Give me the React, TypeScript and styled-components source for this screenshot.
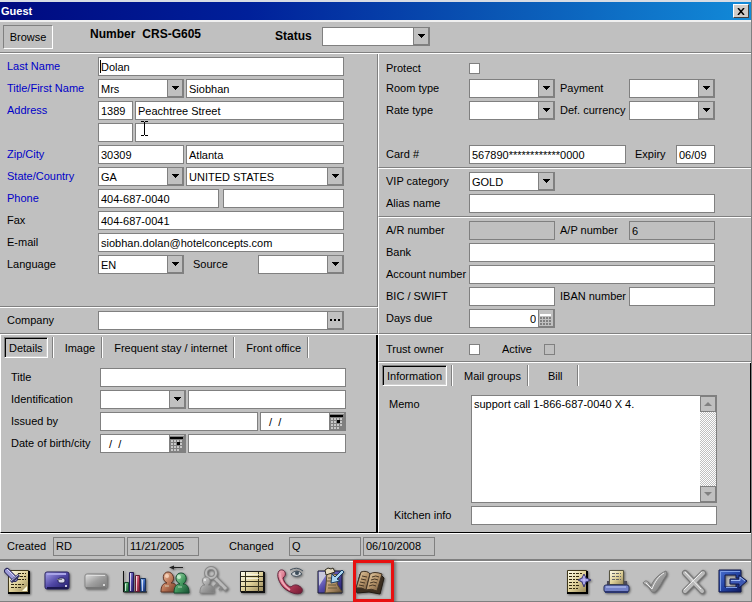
import React from "react";
import styled, { createGlobalStyle, css } from "styled-components";

const GRAY = "#808080";
const FACE = "#c0c0c0";

const GlobalStyle = createGlobalStyle`
  *, *::before, *::after { box-sizing: border-box; }
  body { margin: 0; background: ${FACE}; }
  body, button, input, select, textarea {
    font-family: "Liberation Sans", Arial, sans-serif;
    font-size: 11px;
    color: #000;
  }
`;

const Window = styled.main`
  display: flex;
  flex-direction: column;
  min-height: 100vh;
  background: ${FACE};
  border-right: 1px solid ${GRAY};
`;

const TitleBar = styled.header`
  display: flex;
  align-items: center;
  justify-content: space-between;
  height: 22px;
  padding: 0 2px 0 1px;
  border-top: 2px solid #d8dce4;
  border-bottom: 2px solid #f0f0f0;
  background: linear-gradient(90deg, #000a80 0%, #00209a 33%, #0a56b4 66%, #128ad8 100%);
`;

const WindowTitle = styled.h1`
  margin: 0;
  font-size: 11px;
  line-height: 18px;
  color: #fff;
`;

const CloseButton = styled.button`
  display: grid;
  place-items: center;
  width: 16px;
  height: 14px;
  padding: 0;
  background: #d0ccc8;
  border: 1px solid;
  border-color: #fff #404040 #404040 #fff;
`;

const HeaderBar = styled.div`
  display: flex;
  align-items: flex-start;
  height: 32px;
  padding: 3px 3px 0;
  border-bottom: 1px solid #fff;
  box-shadow: inset 0 -1px 0 ${GRAY};
`;

const BrowseButton = styled.button`
  width: 50px;
  height: 24px;
  padding: 0;
  background: ${FACE};
  border: 1px solid;
  border-color: ${GRAY} #fff #fff ${GRAY};
`;

const Strong = styled.span`
  font-size: 12px;
  font-weight: bold;
  line-height: 19px;
`;

const NumberGroup = styled.div`
  display: flex;
  gap: 7px;
  width: 185px;
  margin-left: 37px;
`;

const StatusGroup = styled.label`
  display: grid;
  grid-template-columns: 47px 108px;
  padding-top: 2px;
`;

const Columns = styled.div`
  display: grid;
  grid-template-columns: 378fr 373fr;
  flex: 1;
`;

const Column = styled.div`
  display: flex;
  flex-direction: column;
  min-width: 0;
`;

const Section = styled.section<{ $side: "left" | "right"; $bottom?: number }>`
  padding: 3px 0 ${(p) => p.$bottom ?? 0}px;
  padding-left: 7px;
  padding-right: ${(p) => (p.$side === "left" ? 33 : 36)}px;
  border-bottom: 1px solid ${GRAY};
  box-shadow: 0 1px 0 #fff;
  margin-bottom: 1px;
  ${(p) =>
    p.$side === "left"
      ? css`border-right: 1px solid ${GRAY};`
      : css`border-left: 1px solid #fff;`}
`;

const TabPanel = styled.section<{ $side: "left" | "right" }>`
  flex: 1;
  padding: 2px ${(p) => (p.$side === "left" ? 30 : 33)}px 3px 3px;
  border-left: 1px solid #fff;
  border-right: ${(p) => (p.$side === "left" ? 2 : 1)}px solid #000;
  border-bottom: 1px solid #000;
`;

const TabList = styled.div`
  display: flex;
  height: 21px;
  gap: 4px;
`;

const TabItem = styled.button<{ $selected?: boolean; $wide?: boolean }>`
  flex: none;
  height: 21px;
  padding: 0 ${(p) => (p.$wide ? 15 : 7)}px;
  background: ${FACE};
  border: 0;
  white-space: nowrap;
  border-right: 1px solid #fff;
  box-shadow: inset -1px 0 0 ${GRAY};
  ${(p) =>
    p.$selected &&
    css`
      padding: 0 4px;
      border: 1px solid;
      border-color: ${GRAY} #fff #fff ${GRAY};
      box-shadow: inset 1px 1px 0 #000, inset -1px -1px 0 #d0d0d0;
    `}
`;

const TabDivider = styled.span`
  width: 2px;
  height: 21px;
  background: linear-gradient(90deg, ${GRAY} 50%, #fff 50%);
`;

const PanelRows = styled.div<{ $top: number }>`
  padding: ${(p) => p.$top}px 0 0 7px;
`;

const Row = styled.div<{ $label?: number; $center?: boolean }>`
  display: grid;
  grid-template-columns: ${(p) => p.$label ?? 91}px minmax(0, 1fr);
  align-items: ${(p) => (p.$center ? "center" : "start")};
  min-height: 22px;
`;

const Caption = styled.label<{ $blue?: boolean; $indent?: number }>`
  padding-left: ${(p) => p.$indent ?? 0}px;
  line-height: 19px;
  white-space: nowrap;
  color: ${(p) => (p.$blue ? "#0000c8" : "#000")};
`;

const Fields = styled.div<{ $cols?: string; $gap?: number }>`
  position: relative;
  display: grid;
  grid-template-columns: ${(p) => p.$cols ?? "minmax(0, 1fr)"};
  column-gap: ${(p) => p.$gap ?? 2}px;
  align-items: center;
`;

const TextInput = styled.input`
  width: 100%;
  min-width: 0;
  height: 19px;
  padding: 0 2px;
  background: #fff;
  border: 1px solid ${GRAY};
  border-radius: 0;
  outline: 0;
  &:read-only { background: ${FACE}; }
`;

const ComboFrame = styled.span`
  display: grid;
  grid-template-columns: minmax(0, 1fr) 17px;
  height: 19px;
  min-width: 0;
  background: #fff;
  border: 1px solid ${GRAY};
  border-right: 0;
`;

const ComboSelect = styled.select`
  grid-area: 1 / 1 / 2 / 3;
  width: 100%;
  height: 17px;
  padding: 0 18px 0 2px;
  appearance: none;
  background: transparent;
  border: 0;
  border-radius: 0;
  outline: 0;
`;

const ComboInput = styled.input<{ $right?: boolean }>`
  width: 100%;
  min-width: 0;
  height: 17px;
  padding: 0 2px;
  background: #fff;
  border: 0;
  outline: 0;
  text-align: ${(p) => (p.$right ? "right" : "left")};
`;

const endCap = css`
  display: grid;
  place-items: center;
  width: 17px;
  height: 17px;
  padding: 0;
  background: ${FACE};
  border: 1px solid ${GRAY};
  border-top: 0;
  border-right-width: 2px;
`;

const ComboArrow = styled.span`
  ${endCap}
  grid-area: 1 / 2;
  pointer-events: none;
`;

const EndButton = styled.button`
  ${endCap}
`;

const Check = styled.input`
  appearance: none;
  width: 11px;
  height: 11px;
  margin: 0;
  background: #fff;
  border: 1px solid ${GRAY};
  &:disabled { background: ${FACE}; }
`;

const Caret = styled.span`
  position: absolute;
  left: 2px;
  top: 3px;
  width: 1px;
  height: 13px;
  background: #000;
`;

const Pointer = styled.svg`
  position: absolute;
  left: 43px;
  top: -3px;
`;

const MemoFrame = styled.div`
  display: grid;
  grid-template-columns: minmax(0, 1fr) 17px;
  height: 108px;
  margin-bottom: 3px;
  background: #fff;
  border: 1px solid ${GRAY};
  border-right: 0;
`;

const MemoText = styled.textarea`
  height: 106px;
  padding: 2px;
  line-height: 13px;
  background: #fff;
  border: 0;
  outline: 0;
  resize: none;
  overflow: hidden;
`;

const ScrollTrack = styled.div`
  display: flex;
  flex-direction: column;
  justify-content: space-between;
  border-right: 1px solid ${GRAY};
  background: repeating-conic-gradient(#c0c0c0 0 25%, #fff 0 50%) 0 0 / 2px 2px;
`;

const ScrollButton = styled.button`
  display: grid;
  place-items: center;
  width: 16px;
  height: 16px;
  padding: 0;
  background: ${FACE};
  border: 1px solid ${GRAY};
`;

const AuditBar = styled.div`
  display: flex;
  align-items: center;
  height: 28px;
  padding: 0 7px 1px;
  border-top: 1px solid #fff;
  border-bottom: 2px solid ${GRAY};
`;

const AuditGroup = styled.div<{ $label: number }>`
  display: grid;
  grid-template-columns: ${(p) => p.$label}px 72px 72px;
  column-gap: 2px;
  margin-right: 30px;
`;

const ToolBar = styled.footer`
  display: flex;
  justify-content: space-between;
  height: 41px;
  border-top: 1px solid #fff;
  border-bottom: 1px solid ${GRAY};
`;

const ToolGroup = styled.div`
  display: flex;
  gap: 3px;
`;

const ToolButton = styled.button`
  position: relative;
  display: grid;
  place-items: center;
  width: 36px;
  height: 38px;
  padding: 0;
  background: transparent;
  border: 0;
  svg { filter: drop-shadow(1px 1px 1px rgba(60, 60, 60, 0.7)); }
`;

const Highlight = styled.span`
  position: absolute;
  left: 2px;
  top: -2px;
  width: 41px;
  height: 42px;
  border: 3px solid #e81010;
  box-shadow: 2px 1px 3px rgba(60, 60, 60, 0.6), inset 1px 1px 3px rgba(60, 60, 60, 0.5);
`;

function DownArrow() {
  return (
    <svg width="7" height="4" viewBox="0 0 7 4" shapeRendering="crispEdges" aria-hidden="true">
      <path d="M0 0h7v1H6v1H5v1H4v1H3V3H2V2H1V1H0z" />
    </svg>
  );
}

function Combo({ id, value = "", label }: { id: string; value?: string; label?: string }) {
  return (
    <ComboFrame>
      <ComboSelect id={id} aria-label={label} defaultValue={value}>
        <option>{value}</option>
      </ComboSelect>
      <ComboArrow><DownArrow /></ComboArrow>
    </ComboFrame>
  );
}

function CalendarIcon() {
  return (
    <svg width="14" height="15" viewBox="0 0 14 15" shapeRendering="crispEdges" aria-hidden="true">
      <path fill="#808080" d="M0 0h14v15H0z" />
      <path fill="#000" d="M0 1h13v2H0z" />
      <path
        stroke="#c8c8c8" strokeWidth="2" strokeDasharray="2 1"
        d="M1 5h11M1 8h11M1 11h11M1 14h8"
      />
      <path fill="#000" d="M7 6h3v3H7z" />
    </svg>
  );
}

function CalculatorIcon() {
  return (
    <svg width="14" height="15" viewBox="0 0 14 15" shapeRendering="crispEdges" aria-hidden="true">
      <path fill="#fff" d="M1 3h11v2H1z" />
      <path stroke="#808080" strokeWidth="2" strokeDasharray="2 1" d="M1 7h11M1 10h11M1 13h11" />
    </svg>
  );
}

function DateField({ id, label }: { id: string; label?: string }) {
  return (
    <ComboFrame>
      <ComboInput id={id} aria-label={label} defaultValue="  /  /" />
      <EndButton type="button" aria-label="Open calendar"><CalendarIcon /></EndButton>
    </ComboFrame>
  );
}

const Icon = ({ children }: { children: React.ReactNode }) => (
  <svg width="32" height="32" viewBox="0 0 32 32" aria-hidden="true">{children}</svg>
);

function IconGradients() {
  const defs: [string, string, string, string][] = [
    ["paper", "#fffff0", "#e0d29a", "#948456"],
    ["violet", "#aaa6ec", "#5148a6", "#211c68"],
    ["silver", "#e4e4e4", "#a0a0a0", "#777777"],
    ["orange", "#f4c8ac", "#bd7858", "#6b3826"],
    ["tan", "#e8d4b0", "#b8966c", "#6b5238"],
    ["green", "#b0e4b8", "#449a60", "#164e32"],
    ["red", "#f4b0bc", "#c04460", "#701830"],
    ["blue", "#b4d4f8", "#3e6ac0", "#142460"],
    ["navy", "#4a70d0", "#2444a4", "#101c60"],
  ];
  return (
    <svg width="0" height="0" display="block" aria-hidden="true">
      <defs>
        {defs.map(([id, a, b, c]) => (
          <linearGradient key={id} id={id} x1="0" y1="0" x2="1" y2="1">
            <stop offset="0" stopColor={a} />
            <stop offset="0.5" stopColor={b} />
            <stop offset="1" stopColor={c} />
          </linearGradient>
        ))}
      </defs>
    </svg>
  );
}

const NoteIcon = () => (
  <Icon>
    <path fill="url(#paper)" stroke="#40381c" d="M6.500 5.500h20v22h-20z" />
    <path fill="none" stroke="#000" strokeWidth="2" d="M6 28h21V6" />
    <path stroke="#302810" strokeDasharray="3 1 2 1" d="M16 8.500h8M18 11.500h6M9 16.500h4M16 14.500h8M9 19.500h13M9 22.500h11" />
    <path fill="#fffde0" d="m20 26 5-5v5z" />
    <path stroke="#29285c" strokeWidth="6" strokeLinecap="round" d="m5 6 8 8" />
    <path stroke="#9d9bd8" strokeWidth="4" strokeLinecap="round" d="m5 6 8 8" />
    <path stroke="#d8d8ff" d="m5 4 8 8" />
    <path stroke="#393866" strokeWidth="3" d="m9 17 8-7" />
    <path stroke="#bdbde8" d="m9 16 7-6" />
  </Icon>
);

const CardIcon = () => (
  <Icon>
    <rect x="4" y="7" width="24" height="17" rx="2" fill="url(#violet)" stroke="#282260" />
    <path stroke="#a9a5e8" strokeWidth="2" d="M6 9h19" />
    <path stroke="#1c1850" strokeWidth="2" d="M6 23h21" />
    <rect x="17" y="13" width="7" height="5" rx="2" fill="#d8d8e8" stroke="#28245c" />
    <path stroke="#777" d="M16 14.500h5" />
    <circle cx="25" cy="21" r="1" fill="#fff" />
  </Icon>
);

const GrayCardIcon = () => (
  <Icon>
    <rect x="5" y="9" width="22" height="14" rx="2" fill="url(#silver)" stroke="#888" />
    <path stroke="#ddd" d="M7 10.500h18" />
    <path stroke="#777" strokeWidth="2" d="M6 23h20" />
    <circle cx="24" cy="20" r="1" fill="#f4f4f4" />
  </Icon>
);

const ChartIcon = () => (
  <Icon>
    <path fill="none" stroke="#111" d="M4.500 6v21H28" />
    <path fill="url(#green)" stroke="#134b2c" d="M5.500 17.500h4v9h-4z" />
    <path fill="url(#violet)" stroke="#211a55" d="M10.500 7.500h4v19h-4z" />
    <path fill="url(#red)" stroke="#621a30" d="M16.500 10.500h4v16h-4z" />
    <path fill="url(#blue)" stroke="#183158" d="M21.500 13.500h5v13h-5z" />
    <path stroke="#fff" opacity=".7" d="M6.500 19v7M11.500 8v18M17.500 11v15M23.500 15v11" />
  </Icon>
);

const PeopleIcon = () => (
  <Icon>
    <path fill="none" stroke="#222" d="M12 2.500h13" />
    <path fill="#222" d="m11 2.500 5-2v4z" />
    <path fill="url(#orange)" stroke="#603424" d="M3 27c0-6 2-9 6-9C3 15 5 7 10 7s8 8 3 11c5 0 6 3 6 9z" />
    <path fill="url(#green)" stroke="#174d31" d="M16 28c0-6 2-9 6-9-6-3-5-11 1-11s7 8 2 11c4 0 6 3 6 9z" />
    <circle cx="9" cy="11" r="2" fill="#ffe4d0" opacity=".7" />
    <circle cx="21" cy="12" r="2" fill="#e0ffe4" opacity=".7" />
    <path stroke="#e2f3df" opacity=".7" d="M20 22h4M7 21h4" />
  </Icon>
);

const KeyIcon = () => (
  <Icon>
    <path fill="none" stroke="#888" strokeWidth="5" d="m18 13 12 12" />
    <path fill="none" stroke="#bbb" strokeWidth="3" d="m17 12 12 12" />
    <path fill="none" stroke="#888" strokeWidth="2" d="m21 18-4 4M25 22l-3 3" />
    <circle cx="14" cy="8" r="5" fill="none" stroke="#888" strokeWidth="4" />
    <circle cx="14" cy="8" r="5" fill="none" stroke="#bbb" strokeWidth="2" />
    <path fill="url(#silver)" stroke="#888" d="M3 28c0-6 2-8 5-8-4-3-3-8 1-8s6 5 2 8c5 0 6 3 6 8z" />
    <circle cx="8" cy="15" r="1" fill="#eee" />
  </Icon>
);

const TableIcon = () => (
  <Icon>
    <path fill="url(#paper)" stroke="#222" d="M4.500 6.500h23v20h-23z" />
    <path fill="none" stroke="#111" strokeWidth="2" d="M5 27h23V7" />
    <path stroke="#33301c" d="M5 11.500h22M5 16.500h22M5 21.500h22M9.500 7v20M22.500 7v20" />
    <path stroke="#fff" opacity=".6" d="M10 9.500h13M10 13.500h13" />
  </Icon>
);

const PhoneIcon = () => (
  <Icon>
    <path
      fill="url(#red)" stroke="#642039"
      d="M4 6c2-2 5-1 6 1 1 3 0 4-2 6 1 4 4 8 8 9 2-2 5-3 8-1 4 2 4 5 2 7-4 2-11 0-17-5C4 18 1 10 4 6z"
    />
    <path fill="none" stroke="#f0a8b6" strokeWidth="2" d="M5 8c0 7 4 13 10 17" />
    <path fill="#d0d4d8" stroke="#45525e" d="M16 9q6-6 11 0-6 5-11 0z" />
    <path fill="none" stroke="#45525e" d="M15 5q7-4 13 1" />
    <circle cx="22" cy="8" r="2" fill="#3c4c5a" />
  </Icon>
);

const ClipboardIcon = () => (
  <Icon>
    <path fill="url(#violet)" stroke="#191b35" d="M4 6h24v22H4z" />
    <path fill="#c8c8dc" d="M5 7h9L5 21z" />
    <path fill="url(#tan)" stroke="#554a2e" d="m13 8 12 2-2 9 5 8-17 1 1-8z" />
    <path fill="#e6dcc0" stroke="#302c20" d="m11 5 3-2 3 1 2-1 2 4-9 3z" />
    <path stroke="#655939" d="M14 13h5M13 16h7M14 20h8M14 23h9" />
    <path fill="#a9d4f0" stroke="#1b3d63" d="m28 5-7 7-3-3-1 9 9-2-3-2 7-7z" />
  </Icon>
);

const BookIcon = () => (
  <Icon>
    <path fill="#3c2e20" stroke="#211a12" d="m3 25 4-16 9 2 12-1 3 3-4 16-11-2-12 1z" />
    <path fill="url(#tan)" stroke="#403224" d="M3 23 8 7q6-2 9 2l-4 16q-4-3-10-2z" />
    <path fill="url(#tan)" stroke="#403224" d="m13 25 4-16q4-3 12 0l-5 17q-6-3-11-1z" />
    <path stroke="#483826" fill="none" d="m9 11 5 1M8 14l5 1M7 17l5 1M6 20l5 1M19 12q4-2 7 0M18 15q4-2 7 0M17 18q4-2 7 0M16 21q4-2 7 0" />
  </Icon>
);

const AddNoteIcon = () => (
  <Icon>
    <path fill="url(#paper)" stroke="#40381c" d="M6.500 5.500h19v22h-19z" />
    <path fill="none" stroke="#000" strokeWidth="2" d="M6 28h20V6" />
    <path stroke="#302810" strokeDasharray="3 1 2 1" d="M8 8.500h13M8 11.500h10M8 14.500h10M8 17.500h9M8 20.500h10M8 23.500h9" />
    <path fill="#8582ce" stroke="#393873" d="m23 9 2 4 5 2-5 2-2 5-2-5-4-2 4-2z" />
    <path stroke="#ccc9ff" d="M23 11v8M20 15h7" />
  </Icon>
);

const PrinterIcon = () => (
  <Icon>
    <path fill="#4c4a58" d="M7 16h3v4h14v-4h3v6H7z" />
    <path fill="url(#paper)" stroke="#575440" d="M9.500 5.500h14v14h-14z" />
    <path stroke="#666" strokeDasharray="3 1" d="M12 8.500h9M12 11.500h9M12 14.500h9" />
    <rect x="4" y="20" width="25" height="7" rx="2" fill="#7482c8" stroke="#26305c" />
    <path stroke="#c0ccf4" d="M6 22h20" />
    <path stroke="#2c3670" strokeWidth="2" d="M5 27h23" />
  </Icon>
);

const CheckIcon = () => (
  <Icon>
    <path fill="url(#silver)" stroke="#777" d="M4 18c2-3 4-2 5-1l3 4C15 14 20 9 27 6c1 2 1 3 0 5-4 5-6 12-11 16-3 1-4-1-5-3-2-3-4-4-7-6z" />
    <path fill="none" stroke="#eee" d="m7 18 6 6c3-8 7-13 12-16" />
  </Icon>
);

const CrossIcon = () => (
  <Icon>
    <path fill="none" stroke="#777" strokeWidth="6" strokeLinecap="round" d="m7 8 17 18M25 8 7 26" />
    <path fill="none" stroke="#bbb" strokeWidth="4" strokeLinecap="round" d="m7 8 17 18M25 8 7 26" />
    <path fill="none" stroke="#eee" d="m7 7 16 17M24 7 6 25" />
  </Icon>
);

const ExitIcon = () => (
  <Icon>
    <path fill="url(#navy)" stroke="#10184c" d="M2 5h22v8h-5v-3H8v12h11v-3h5v8H2z" />
    <path fill="none" stroke="#7c9ce4" d="M3.500 26V6.500H23M9 22.500h11" />
    <path fill="#3c58b4" stroke="#10184c" d="M13 14h9v-4l8 6-8 7v-4h-9z" />
    <path fill="none" stroke="#9fb8f0" d="M14 15.500h9V12l5 4" />
  </Icon>
);

const leftTools: [string, () => React.ReactElement][] = [
  ["Notes", NoteIcon], ["Guest card", CardIcon], ["Card", GrayCardIcon], ["Statistics", ChartIcon],
  ["Merge guests", PeopleIcon], ["Guest access", KeyIcon], ["Table", TableIcon],
  ["Call log", PhoneIcon], ["Tasks", ClipboardIcon], ["Guest book", BookIcon],
];

const rightTools: [string, () => React.ReactElement][] = [
  ["Add note", AddNoteIcon], ["Print", PrinterIcon], ["Confirm", CheckIcon],
  ["Cancel", CrossIcon], ["Exit", ExitIcon],
];

const pair = "minmax(0, 86fr) minmax(0, 158fr)";
const pairWithLabel = "minmax(0, 1fr) 70px minmax(0, 1fr)";

export default function App() {
  return (
    <Window>
      <GlobalStyle />
      <IconGradients />
      <TitleBar>
        <WindowTitle>Guest</WindowTitle>
        <CloseButton type="button" aria-label="Close">
          <svg width="8" height="7" viewBox="0 0 8 7" aria-hidden="true">
            <path stroke="#000" strokeWidth="1.500" d="m1 0 6 7M7 0 1 7" />
          </svg>
        </CloseButton>
      </TitleBar>

      <HeaderBar>
        <BrowseButton type="button">Browse</BrowseButton>
        <NumberGroup><Strong>Number</Strong><Strong>CRS-G605</Strong></NumberGroup>
        <StatusGroup htmlFor="status"><Strong>Status</Strong><Combo id="status" /></StatusGroup>
      </HeaderBar>

      <Columns>
        <Column>
          <Section $side="left" $bottom={29}>
            <Row>
              <Caption $blue htmlFor="last">Last Name</Caption>
              <Fields><TextInput id="last" defaultValue="Dolan" /><Caret /></Fields>
            </Row>
            <Row>
              <Caption $blue htmlFor="title">Title/First Name</Caption>
              <Fields $cols={pair}>
                <Combo id="title" value="Mrs" />
                <TextInput aria-label="First name" defaultValue="Siobhan" />
              </Fields>
            </Row>
            <Row>
              <Caption $blue htmlFor="house">Address</Caption>
              <Fields $cols="35px minmax(0, 1fr)">
                <TextInput id="house" defaultValue="1389" />
                <TextInput aria-label="Street" defaultValue="Peachtree Street" />
              </Fields>
            </Row>
            <Row>
              <span />
              <Fields $cols="35px minmax(0, 1fr)">
                <TextInput aria-label="Unit" />
                <TextInput aria-label="Address line 2" />
                <Pointer width="7" height="17" viewBox="0 0 7 17" shapeRendering="crispEdges" aria-hidden="true">
                  <path d="M0 1h3v1h1V1h3v1H4v13h3v1H4v-1H3v1H0v-1h3V2H0z" />
                </Pointer>
              </Fields>
            </Row>
            <Row>
              <Caption $blue htmlFor="zip">Zip/City</Caption>
              <Fields $cols={pair}>
                <TextInput id="zip" defaultValue="30309" />
                <TextInput aria-label="City" defaultValue="Atlanta" />
              </Fields>
            </Row>
            <Row>
              <Caption $blue htmlFor="state">State/Country</Caption>
              <Fields $cols={pair}>
                <Combo id="state" value="GA" />
                <Combo id="country" label="Country" value="UNITED STATES" />
              </Fields>
            </Row>
            <Row>
              <Caption $blue htmlFor="phone">Phone</Caption>
              <Fields $cols="minmax(0, 1fr) minmax(0, 1fr)" $gap={4}>
                <TextInput id="phone" defaultValue="404-687-0040" />
                <TextInput aria-label="Second phone" />
              </Fields>
            </Row>
            <Row>
              <Caption htmlFor="fax">Fax</Caption>
              <Fields><TextInput id="fax" defaultValue="404-687-0041" /></Fields>
            </Row>
            <Row>
              <Caption htmlFor="email">E-mail</Caption>
              <Fields><TextInput id="email" defaultValue="siobhan.dolan@hotelconcepts.com" /></Fields>
            </Row>
            <Row>
              <Caption htmlFor="language">Language</Caption>
              <Fields $cols="minmax(0, 1fr) 70px minmax(0, 1fr)">
                <Combo id="language" value="EN" />
                <Caption $indent={7} htmlFor="source">Source</Caption>
                <Combo id="source" />
              </Fields>
            </Row>
          </Section>
          <Section $side="left">
            <Row>
              <Caption htmlFor="company">Company</Caption>
              <ComboFrame>
                <ComboInput id="company" />
                <EndButton type="button" aria-label="Find company">
                  <svg width="10" height="2" viewBox="0 0 10 2" aria-hidden="true">
                    <path d="M0 0h2v2H0zM4 0h2v2H4zM8 0h2v2H8z" />
                  </svg>
                </EndButton>
              </ComboFrame>
            </Row>
          </Section>
          <TabPanel $side="left">
            <TabList role="tablist">
              <TabItem role="tab" aria-selected $selected>Details</TabItem>
              <TabDivider />
              <TabItem role="tab">Image</TabItem>
              <TabItem role="tab">Frequent stay / internet</TabItem>
              <TabItem role="tab">Front office</TabItem>
            </TabList>
            <PanelRows $top={10}>
              <Row $label={89}>
                <Caption htmlFor="doc-title">Title</Caption>
                <TextInput id="doc-title" />
              </Row>
              <Row $label={89}>
                <Caption htmlFor="ident">Identification</Caption>
                <Fields $cols={pair}><Combo id="ident" /><TextInput aria-label="Identification number" /></Fields>
              </Row>
              <Row $label={89}>
                <Caption htmlFor="issued">Issued by</Caption>
                <Fields $cols="minmax(0, 158fr) minmax(0, 86fr)">
                  <TextInput id="issued" /><DateField id="issue-date" label="Issue date" />
                </Fields>
              </Row>
              <Row $label={89}>
                <Caption htmlFor="birth">Date of birth/city</Caption>
                <Fields $cols={pair}><DateField id="birth" /><TextInput aria-label="City of birth" /></Fields>
              </Row>
            </PanelRows>
          </TabPanel>
        </Column>

        <Column>
          <Section $side="right">
            <Row $label={83} $center>
              <Caption htmlFor="protect">Protect</Caption>
              <Check id="protect" type="checkbox" />
            </Row>
            <Row $label={83}>
              <Caption htmlFor="room">Room type</Caption>
              <Fields $cols={pairWithLabel}>
                <Combo id="room" />
                <Caption $indent={3} htmlFor="payment">Payment</Caption>
                <Combo id="payment" />
              </Fields>
            </Row>
            <Row $label={83}>
              <Caption htmlFor="rate">Rate type</Caption>
              <Fields $cols={pairWithLabel}>
                <Combo id="rate" />
                <Caption $indent={3} htmlFor="currency">Def. currency</Caption>
                <Combo id="currency" />
              </Fields>
            </Row>
            <Row />
            <Row $label={83}>
              <Caption htmlFor="card">Card #</Caption>
              <Fields $cols="minmax(0, 1fr) 46px 39px">
                <TextInput id="card" defaultValue="567890************0000" />
                <Caption $indent={7} htmlFor="expiry">Expiry</Caption>
                <TextInput id="expiry" defaultValue="06/09" />
              </Fields>
            </Row>
          </Section>
          <Section $side="right">
            <Row $label={83}>
              <Caption htmlFor="vip">VIP category</Caption>
              <Fields $cols={pairWithLabel}><Combo id="vip" value="GOLD" /></Fields>
            </Row>
            <Row $label={83}>
              <Caption htmlFor="alias">Alias name</Caption>
              <TextInput id="alias" />
            </Row>
          </Section>
          <Section $side="right" $bottom={2}>
            <Row $label={83}>
              <Caption htmlFor="ar">A/R number</Caption>
              <Fields $cols={pairWithLabel}>
                <TextInput id="ar" readOnly />
                <Caption $indent={3} htmlFor="ap">A/P number</Caption>
                <TextInput id="ap" readOnly value="6" />
              </Fields>
            </Row>
            <Row $label={83}>
              <Caption htmlFor="bank">Bank</Caption>
              <TextInput id="bank" />
            </Row>
            <Row $label={83}>
              <Caption htmlFor="account">Account number</Caption>
              <TextInput id="account" />
            </Row>
            <Row $label={83}>
              <Caption htmlFor="bic">BIC / SWIFT</Caption>
              <Fields $cols={pairWithLabel}>
                <TextInput id="bic" />
                <Caption $indent={3} htmlFor="iban">IBAN number</Caption>
                <TextInput id="iban" />
              </Fields>
            </Row>
            <Row $label={83}>
              <Caption htmlFor="days">Days due</Caption>
              <Fields $cols={pairWithLabel}>
                <ComboFrame>
                  <ComboInput id="days" $right defaultValue="0" />
                  <EndButton type="button" aria-label="Calculator"><CalculatorIcon /></EndButton>
                </ComboFrame>
              </Fields>
            </Row>
          </Section>
          <Section $side="right" $bottom={1}>
            <Row $label={83} $center>
              <Caption htmlFor="trust">Trust owner</Caption>
              <Fields $cols="32px 41px 11px" $gap={1}>
                <Check id="trust" type="checkbox" />
                <Caption htmlFor="active">Active</Caption>
                <Check id="active" type="checkbox" disabled />
              </Fields>
            </Row>
          </Section>
          <TabPanel $side="right">
            <TabList role="tablist">
              <TabItem role="tab" aria-selected $selected>Information</TabItem>
              <TabDivider />
              <TabItem role="tab">Mail groups</TabItem>
              <TabItem role="tab" $wide>Bill</TabItem>
            </TabList>
            <PanelRows $top={9}>
              <Row $label={82}>
                <Caption htmlFor="memo">Memo</Caption>
                <MemoFrame>
                  <MemoText id="memo" defaultValue="support call 1-866-687-0040 X 4." />
                  <ScrollTrack>
                    <ScrollButton type="button" aria-label="Scroll up">
                      <svg width="8" height="4" viewBox="0 0 8 4" aria-hidden="true"><path fill={GRAY} d="m4 0 4 4H0z" /></svg>
                    </ScrollButton>
                    <ScrollButton type="button" aria-label="Scroll down">
                      <svg width="8" height="4" viewBox="0 0 8 4" aria-hidden="true"><path fill={GRAY} d="M0 0h8L4 4z" /></svg>
                    </ScrollButton>
                  </ScrollTrack>
                </MemoFrame>
              </Row>
              <Row $label={82}>
                <Caption $indent={5} htmlFor="kitchen">Kitchen info</Caption>
                <TextInput id="kitchen" />
              </Row>
            </PanelRows>
          </TabPanel>
        </Column>
      </Columns>

      <AuditBar>
        <AuditGroup $label={44}>
          <Caption htmlFor="created">Created</Caption>
          <TextInput id="created" readOnly value="RD" />
          <TextInput aria-label="Created on" readOnly value="11/21/2005" />
        </AuditGroup>
        <AuditGroup $label={58}>
          <Caption htmlFor="changed">Changed</Caption>
          <TextInput id="changed" readOnly value="Q" />
          <TextInput aria-label="Changed on" readOnly value="06/10/2008" />
        </AuditGroup>
      </AuditBar>

      <ToolBar>
        <ToolGroup>
          {leftTools.map(([name, Glyph]) => (
            <ToolButton key={name} type="button" aria-label={name}>
              <Glyph />
              {name === "Guest book" && <Highlight />}
            </ToolButton>
          ))}
        </ToolGroup>
        <ToolGroup>
          {rightTools.map(([name, Glyph]) => (
            <ToolButton key={name} type="button" aria-label={name}><Glyph /></ToolButton>
          ))}
        </ToolGroup>
      </ToolBar>
    </Window>
  );
}
